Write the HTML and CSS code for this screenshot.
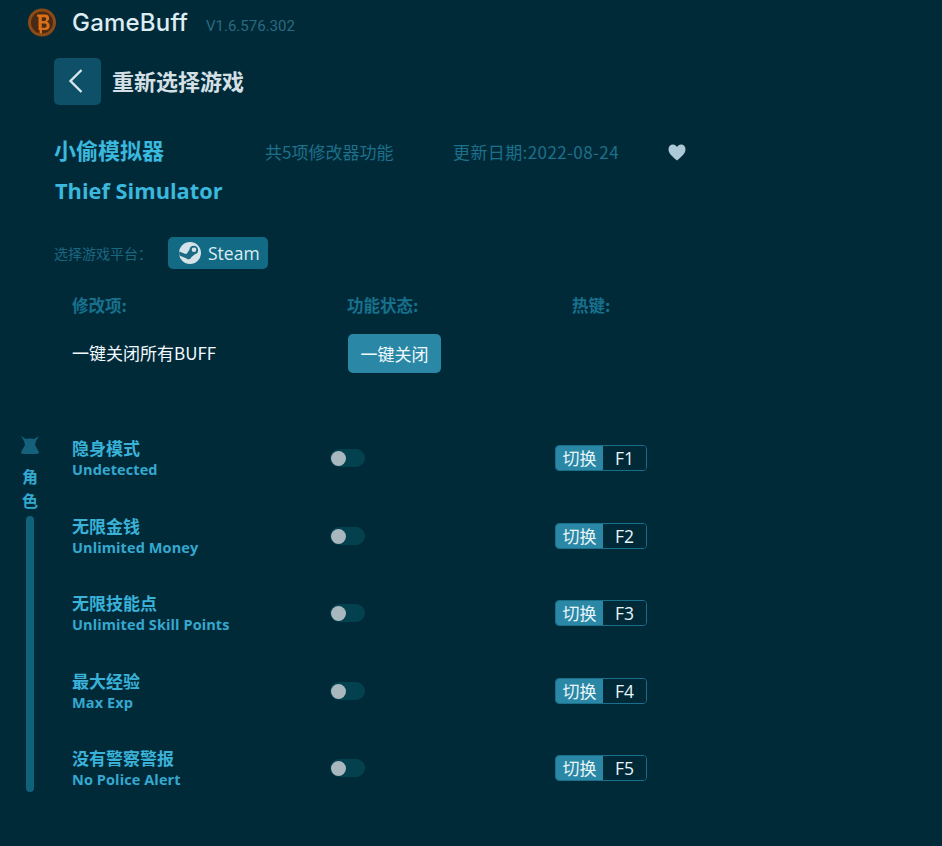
FILE: index.html
```html
<!DOCTYPE html>
<html lang="zh-CN">
<head>
<meta charset="utf-8">
<title>GameBuff</title>
<link rel="stylesheet" href="styles.css">
</head>
<body>
<div class="page">
  <header class="topbar">
    <svg class="logo" viewBox="0 0 30 30" width="30" height="30" aria-hidden="true">
      <circle cx="15" cy="14.500" r="12.500" fill="#4a2a14" stroke="#8c4a14" stroke-width="3"/>
      <path d="M10 6.500h8.500c2.400 0 3.600 1.600 3.600 3.700 0 1.800-.9 3-2.300 3.600 1.800.5 2.900 2 2.900 4 0 2.600-1.700 4.300-4.400 4.300h-3.300v3.400h-2.400v-3.400H11.500V8.800H10z" fill="#d96f18"/>
      <path d="M14.800 9.300v3.700h2.700c1 0 1.600-.7 1.600-1.900s-.6-1.800-1.600-1.800zM14.800 15.400v4.300h3c1.100 0 1.800-.8 1.800-2.100s-.7-2.200-1.800-2.200z" fill="#4a2a14"/>
    </svg>
    <span class="brand">GameBuff</span>
    <span class="version">V1.6.576.302</span>
  </header>

  <div class="backrow">
    <button class="backbtn" aria-label="返回">
      <svg viewBox="0 0 47 47" width="47" height="47" aria-hidden="true"><path d="M27.500 12 L16.500 23 L27.500 34" fill="none" stroke="#d6e6ec" stroke-width="2.400"/></svg>
    </button>
    <h1 class="backtitle">重新选择游戏</h1>
  </div>

  <section class="gameinfo">
    <div class="titlerow">
      <h2 class="gametitle cn">小偷模拟器</h2>
      <span class="meta count">共5项修改器功能</span>
      <span class="meta date">更新日期:2022-08-24</span>
      <svg class="heart" viewBox="0 0 18 17" width="18" height="17" aria-hidden="true"><path d="M9 16.500C5 13 .5 10 .5 5.300.5 2.500 2.500.5 5 .5c1.700 0 3.100.9 4 2.400C9.900 1.400 11.300.5 13 .5c2.500 0 4.500 2 4.500 4.800C17.500 10 13 13 9 16.500z" fill="#adc8d6"/></svg>
    </div>
    <h2 class="gametitle en">Thief Simulator</h2>
    <div class="platform">
      <span class="platformlabel">选择游戏平台：</span>
      <button class="steam">
        <svg viewBox="0 0 24 24" width="24" height="24" aria-hidden="true">
          <circle cx="12" cy="12" r="11" fill="#d5e2e8"/>
          <path d="M1.500 14.500 L8 17.200 A3.200 3.200 0 0 0 13.500 16 L17 13.200 A4.300 4.300 0 1 0 11.500 8.500 L9 12.500 A3.400 3.400 0 0 0 7.500 13 L1.200 10.500 A11 11 0 0 0 1.500 14.500z" fill="#1a6a86"/>
          <circle cx="16" cy="8.800" r="2.300" fill="#d5e2e8"/>
        </svg>
        <span>Steam</span>
      </button>
    </div>
  </section>

  <div class="grid heads">
    <span class="head">修改项:</span>
    <span class="head">功能状态:</span>
    <span class="head">热键:</span>
  </div>
  <div class="grid closeall">
    <span class="closelabel">一键关闭所有BUFF</span>
    <div><button class="closebtn">一键关闭</button></div>
  </div>

  <div class="cheats">
    <aside class="side">
      <svg class="sideicon" viewBox="0 0 20 20" width="20" height="20" aria-hidden="true"><path d="M1 1 L6 4 Q10 3 14 4 L19 1 L16 6 L15 10 L19 17 Q19 19 17 19 H3 Q1 19 1 17 L5 10 L4 6z" fill="#15607a"/></svg>
      <span class="sidetext">角</span>
      <span class="sidetext">色</span>
      <span class="sidebar"></span>
    </aside>
    <div class="rows">
      <div class="grid row">
        <div class="names"><span class="namecn">隐身模式</span><span class="nameen">Undetected</span></div>
        <span class="toggle"><span class="knob"></span></span>
        <span class="hotkey"><span class="hk-action">切换</span><span class="hk-key">F1</span></span>
      </div>
      <div class="grid row">
        <div class="names"><span class="namecn">无限金钱</span><span class="nameen">Unlimited Money</span></div>
        <span class="toggle"><span class="knob"></span></span>
        <span class="hotkey"><span class="hk-action">切换</span><span class="hk-key">F2</span></span>
      </div>
      <div class="grid row">
        <div class="names"><span class="namecn">无限技能点</span><span class="nameen">Unlimited Skill Points</span></div>
        <span class="toggle"><span class="knob"></span></span>
        <span class="hotkey"><span class="hk-action">切换</span><span class="hk-key">F3</span></span>
      </div>
      <div class="grid row">
        <div class="names"><span class="namecn">最大经验</span><span class="nameen">Max Exp</span></div>
        <span class="toggle"><span class="knob"></span></span>
        <span class="hotkey"><span class="hk-action">切换</span><span class="hk-key">F4</span></span>
      </div>
      <div class="grid row">
        <div class="names"><span class="namecn">没有警察警报</span><span class="nameen">No Police Alert</span></div>
        <span class="toggle"><span class="knob"></span></span>
        <span class="hotkey"><span class="hk-action">切换</span><span class="hk-key">F5</span></span>
      </div>
    </div>
  </div>
</div>
</body>
</html>
```

FILE: styles.css
```css
* { box-sizing: border-box; }
html, body { margin: 0; height: 100%; }
body {
  background: #012a39;
  font-family: "Noto Sans CJK SC", "Noto Sans", sans-serif;
  color: #fff;
  overflow: hidden;
}
h1, h2 { margin: 0; }
button { font-family: inherit; border: 0; padding: 0; }
.page { width: 942px; height: 846px; overflow: hidden; }

.topbar { display: flex; align-items: center; height: 46px; padding: 0 0 0 27px; }
.logo { margin-right: 15px; flex: none; }
.brand { font: 500 24px/30px Inter, sans-serif; letter-spacing: .2px; color: #dcedf3; width: 134px; white-space: nowrap; }
.version { font: 400 15px/20px Roboto, sans-serif; color: #2a6a80; margin-top: 5px; }

.backrow { display: flex; align-items: center; margin: 12px 0 0 54px; height: 47px; }
.backbtn { width: 47px; height: 47px; border-radius: 5px; background: #0d5068; display: block; }
.backbtn svg { display: block; }
.backtitle { font-size: 22px; line-height: 30px; font-weight: 700; color: #d4e0e5; margin: -3px 0 0 11px; }

.gameinfo { padding-left: 54px; }
.titlerow { display: flex; align-items: center; height: 40px; margin-top: 26px; }
.gametitle { font-weight: 700; color: #3ab8dd; }
.gametitle.cn { font-size: 22px; line-height: 40px; width: 211px; margin-top: -4px; }
.gametitle.en { font: 700 21.800px/40px "Open Sans", sans-serif; height: 40px; padding-left: 1px; }
.meta { font-size: 17px; line-height: 24px; color: #1d7089; margin-top: 1px; }
.count { width: 188px; }
.date { width: 215px; letter-spacing: .4px; }
.heart { margin-top: 3px; }
.platform { display: flex; align-items: center; height: 32px; margin-top: 26px; }
.platformlabel { font-size: 14px; color: #1a6780; width: 114px; margin-top: -1px; }
.steam {
  display: flex; align-items: center; gap: 6px;
  width: 100px; height: 32px; padding-left: 10px;
  background: #136a85; border-radius: 5px; color: #dcedf3;
  font: 500 17.500px/32px "Open Sans", sans-serif;
}

.grid { display: grid; grid-template-columns: 275px 225px 1fr; padding-left: 72px; }
.heads { margin-top: 22px; height: 28px; align-items: center; }
.head { font-size: 16.500px; font-weight: 700; color: #17708c; line-height: 28px; margin-top: -1px; }
.closeall { margin-top: 15px; height: 39px; align-items: center; }
.closelabel { font-size: 17px; color: #f2fbff; margin-top: -2px; }
.closebtn {
  display: block; width: 93px; height: 39px; margin-left: 1px;
  background: #2a88a6; border-radius: 5px; color: #f2fbff;
  font-size: 17px; line-height: 37px;
}

.cheats { position: relative; margin-top: 63px; }
.side { position: absolute; left: 18px; top: 0; width: 24px; height: 356px; display: flex; flex-direction: column; align-items: center; }
.sideicon { flex: none; margin-top: -1px; }
.sidetext { font-size: 16px; line-height: 23.500px; font-weight: 700; color: #33a9cf; }
.sideicon + .sidetext { margin-top: 10px; }
.sidebar { width: 8px; height: 276px; margin-top: 4px; border-radius: 4px; background: #0f6279; flex: none; }

.rows { display: flex; flex-direction: column; }
.row { height: 77.500px; align-items: start; }
.names { display: flex; flex-direction: column; }
.namecn { font-size: 17px; line-height: 24px; font-weight: 700; color: #3ab2d8; }
.nameen { font: 700 14.500px/20px "Open Sans", sans-serif; color: #35a8cf; letter-spacing: .1px; }
.toggle { position: relative; display: block; width: 35px; height: 18px; margin: 13px 0 0 -17px; border-radius: 9px; background: #04414f; }
.knob { position: absolute; left: 1px; top: 2px; width: 15px; height: 15px; border-radius: 50%; background: #a9b7bf; }
.hotkey {
  display: flex; width: 92px; height: 26px; margin: 9px 0 0 -17px;
  border: 1px solid #1a6f8b; border-radius: 4px; overflow: hidden;
  font-size: 17px; line-height: 23px; color: #e9f5f9;
}
.hk-action { width: 47px; background: #2a88a6; text-align: center; }
.hk-key { flex: 1; text-align: center; font-family: "Open Sans", sans-serif; font-size: 17.500px; font-weight: 500; line-height: 24px; background: #012a39; }
```
